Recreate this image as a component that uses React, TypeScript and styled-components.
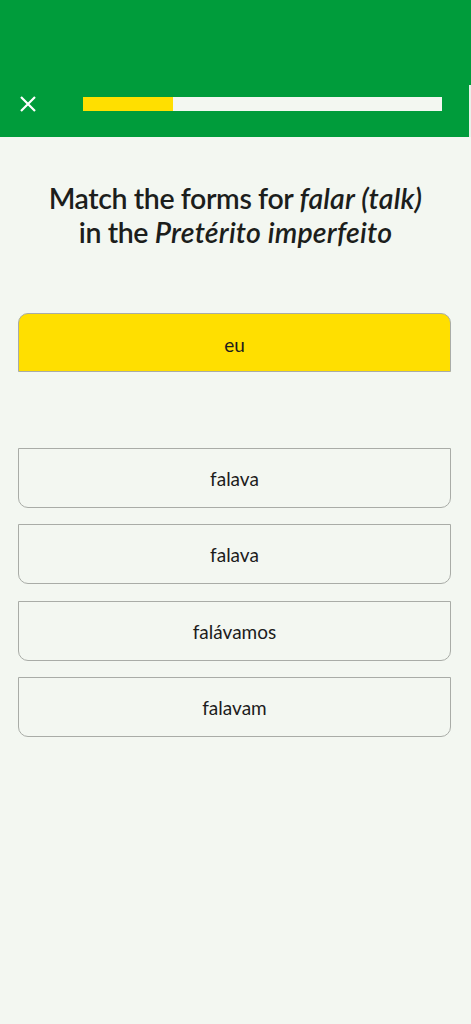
import styled, {createGlobalStyle} from 'styled-components'

const GlobalStyle = createGlobalStyle`
  html, body {
    margin: 0;
    padding: 0;
    background: #f3f7f1;
    font-family: Lato, 'Open Sans', sans-serif;
    color: #1c1c1c;
  }
`

const options = ['falava', 'falava', 'falávamos', 'falavam']

export default function App() {
  const progress = 25

  return (
    <Page>
      <GlobalStyle />
      <Header>
        <CloseButton aria-label="Close">
          <svg width="18" height="18" viewBox="0 0 18 18" fill="none">
            <path d="M2 2 L16 16 M16 2 L2 16" stroke="#fff" strokeWidth="2.2" />
          </svg>
        </CloseButton>
        <Track>
          <Fill style={{width: `${progress}%`}} />
        </Track>
      </Header>

      <Title>
        Match the forms for <em>falar (talk)</em>
        <br />
        in the <em>Pretérito imperfeito</em>
      </Title>

      <Content>
        <Card selected>eu</Card>
        <Options>
          {options.map((opt, i) => (
            <Card key={i}>{opt}</Card>
          ))}
        </Options>
      </Content>
    </Page>
  )
}

const Page = styled.div`
  min-height: 1024px;
  display: flex;
  flex-direction: column;
`

const Header = styled.header`
  position: relative;
  height: 137px;
  background: #009c3b;
  display: flex;
  align-items: flex-end;
  gap: 46px;
  padding: 0 29px 26px 19px;
  box-sizing: border-box;

  &::after {
    content: '';
    position: absolute;
    right: 0;
    top: 85px;
    bottom: 0;
    width: 2px;
    background: #e9f2ea;
  }
`

const CloseButton = styled.button`
  width: 18px;
  height: 18px;
  padding: 0;
  margin-bottom: -2px;
  border: none;
  background: none;
  display: flex;
  cursor: pointer;
`

const Track = styled.div`
  flex: 1;
  height: 14px;
  background: #f3f7f1;
  display: flex;
`

const Fill = styled.div`
  background: #ffdf00;
`

const Title = styled.h1`
  margin: 44px 0 0;
  text-align: center;
  font-size: 28.5px;
  line-height: 34px;
  font-weight: 600;
  letter-spacing: -0.4px;
  color: #1c1e1c;

  em {
    font-weight: 600;
    font-style: italic;
    letter-spacing: 0.2px;
  }
`

const Content = styled.main`
  padding: 64px 20px 0 18px;
  display: flex;
  flex-direction: column;
  gap: 76px;
`

const Options = styled.div`
  display: flex;
  flex-direction: column;
  gap: 16.3px;
`

const Card = styled.div<{selected?: boolean}>`
  height: ${({selected}) => (selected ? '59px' : '60px')};
  box-sizing: border-box;
  display: flex;
  align-items: center;
  justify-content: center;
  font-size: 19px;
  color: #1c1c1c;
  border: 1px solid #a9aca7;
  background: ${({selected}) => (selected ? '#ffdf00' : '#f3f7f1')};
  border-radius: ${({selected}) => (selected ? '10px 10px 0 0' : '0 0 10px 10px')};
  padding-top: ${({selected}) => (selected ? '3px' : '1px')};
`
